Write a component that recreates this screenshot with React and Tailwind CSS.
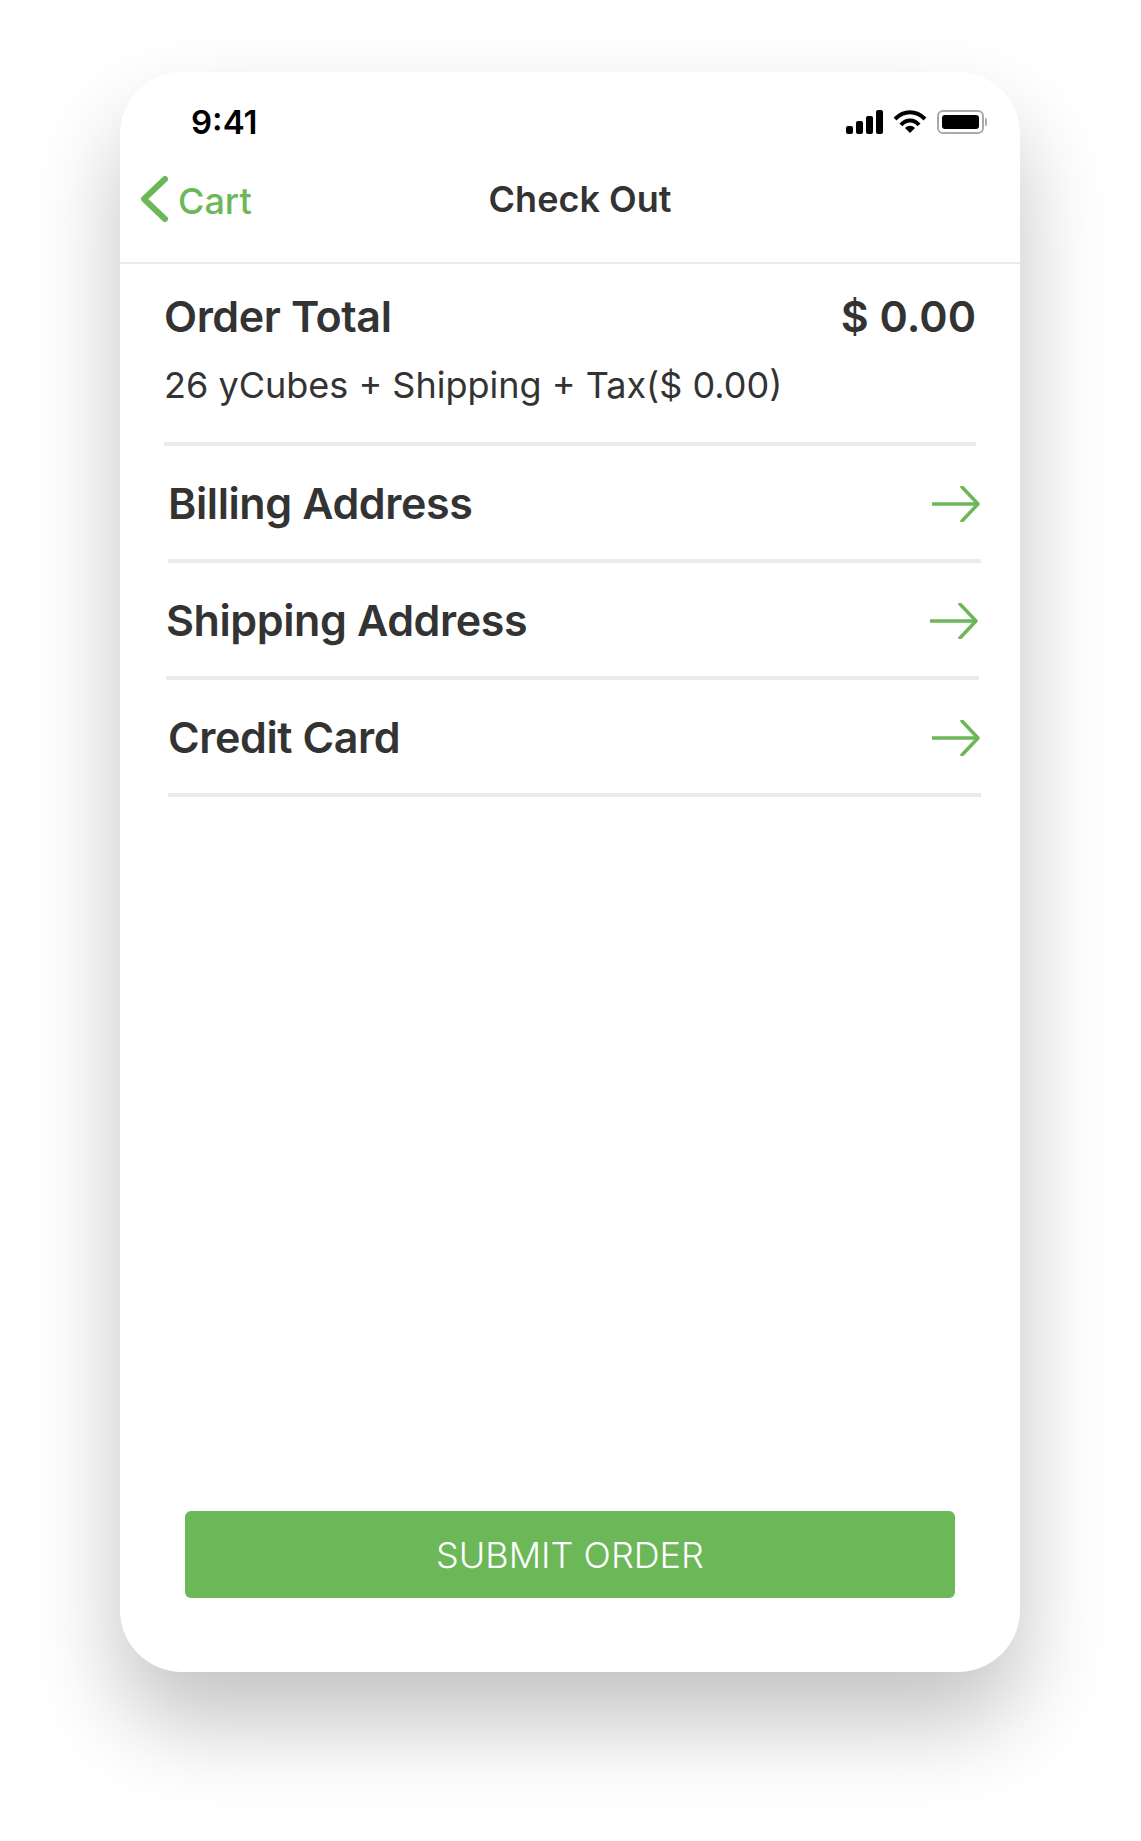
const GREEN = '#6cb758';

const ArrowRight = () => (
  <svg width="50" height="36" viewBox="0 0 50 36" fill="none" stroke="#6cb758" strokeWidth="3.5">
    <path d="M1 18H47" />
    <path d="M31 1L47 18L31 35" strokeLinecap="round" strokeLinejoin="round" />
  </svg>
);

const StatusIcons = () => (
  <div className="flex items-center">
    <svg width="38" height="24" viewBox="0 0 38 24" fill="#000">
      <rect x="1" y="16" width="7" height="8" rx="2" />
      <rect x="11" y="11" width="7" height="13" rx="2" />
      <rect x="21" y="6" width="7" height="18" rx="2" />
      <rect x="31" y="0" width="7" height="24" rx="2" />
    </svg>
    <svg className="ml-[10px]" width="34" height="24" viewBox="0 0 34 24" fill="none" stroke="#000" strokeWidth="4">
      <path d="M2 9C11 0 23 0 32 9" />
      <path d="M8 15C13 9 21 9 26 15" />
      <path d="M12 18L17 23L22 18C19 15 15 15 12 18Z" fill="#000" stroke="none" />
    </svg>
    <div className="ml-[10px] flex items-center">
      <div className="flex h-[24px] w-[47px] items-center rounded-[6px] border-2 border-[#a9a9a9] p-[3px]">
        <div className="h-full w-full rounded-[3px] bg-black" />
      </div>
      <div className="ml-[1px] h-[8px] w-[2px] rounded-r-sm bg-[#a9a9a9]" />
    </div>
  </div>
);

const AddressRow = ({ label, className }) => (
  <div className={`flex h-[117px] items-center justify-between border-b-4 border-[#ebebeb] pt-[2px] ${className}`}>
    <span className="text-[43px] font-semibold tracking-[-0.4px] text-[#333333]">{label}</span>
    <ArrowRight />
  </div>
);

export default function App() {
  return (
    <div className="h-[1841px] w-[1141px] overflow-hidden bg-white pt-[72px] font-['Inter',sans-serif]">
      <div className="mx-[120px] flex h-[1600px] w-[900px] flex-col rounded-[62px] bg-white shadow-[0_50px_90px_rgba(0,0,0,0.24)]">
        <div className="flex h-[192px] flex-col border-b-2 border-[#ebebeb]">
          <div className="flex items-center justify-between pl-[71px] pr-[33px] pt-[30px]">
            <span className="text-[33px] leading-[40px] font-semibold text-black">9:41</span>
            <StatusIcons />
          </div>
          <div className="relative mt-[34px] flex items-center justify-center pl-[20px]">
            <div className="absolute left-[20px] flex items-center">
              <svg width="28" height="46" viewBox="0 0 28 46" fill="none" stroke="#6cb758" strokeWidth="6" strokeLinecap="round" strokeLinejoin="round">
                <path d="M25 3L4 23L25 43" />
              </svg>
              <span className="ml-[10px] mt-[3px] text-[36px] font-medium text-[#6cb758]">Cart</span>
            </div>
            <span className="text-[36px] leading-[46px] font-semibold text-[#333333]">Check Out</span>
          </div>
        </div>

        <div className="mx-[44px] flex h-[182px] flex-col border-b-4 border-[#ebebeb]">
          <div className="mt-[26px] flex items-center justify-between">
            <span className="text-[43px] leading-[52px] font-semibold tracking-[-0.4px] text-[#333333]">Order Total</span>
            <span className="text-[43px] leading-[52px] font-semibold text-[#333333]">$ 0.00</span>
          </div>
          <div className="mt-[20px] text-[36px] leading-[46px] text-[#333333]">26 yCubes + Shipping + Tax($ 0.00)</div>
        </div>

        <AddressRow label="Billing Address" className="ml-[48px] mr-[39px] h-[106px]" />
        <AddressRow label="Shipping Address" className="ml-[46px] mr-[41px]" />
        <AddressRow label="Credit Card" className="ml-[48px] mr-[39px]" />

        <div className="mx-[65px] mb-[74px] mt-auto flex h-[87px] items-center justify-center rounded-[6px] bg-[#6cb758]">
          <span className="text-[36px] font-light text-white">SUBMIT ORDER</span>
        </div>
      </div>
    </div>
  );
}
